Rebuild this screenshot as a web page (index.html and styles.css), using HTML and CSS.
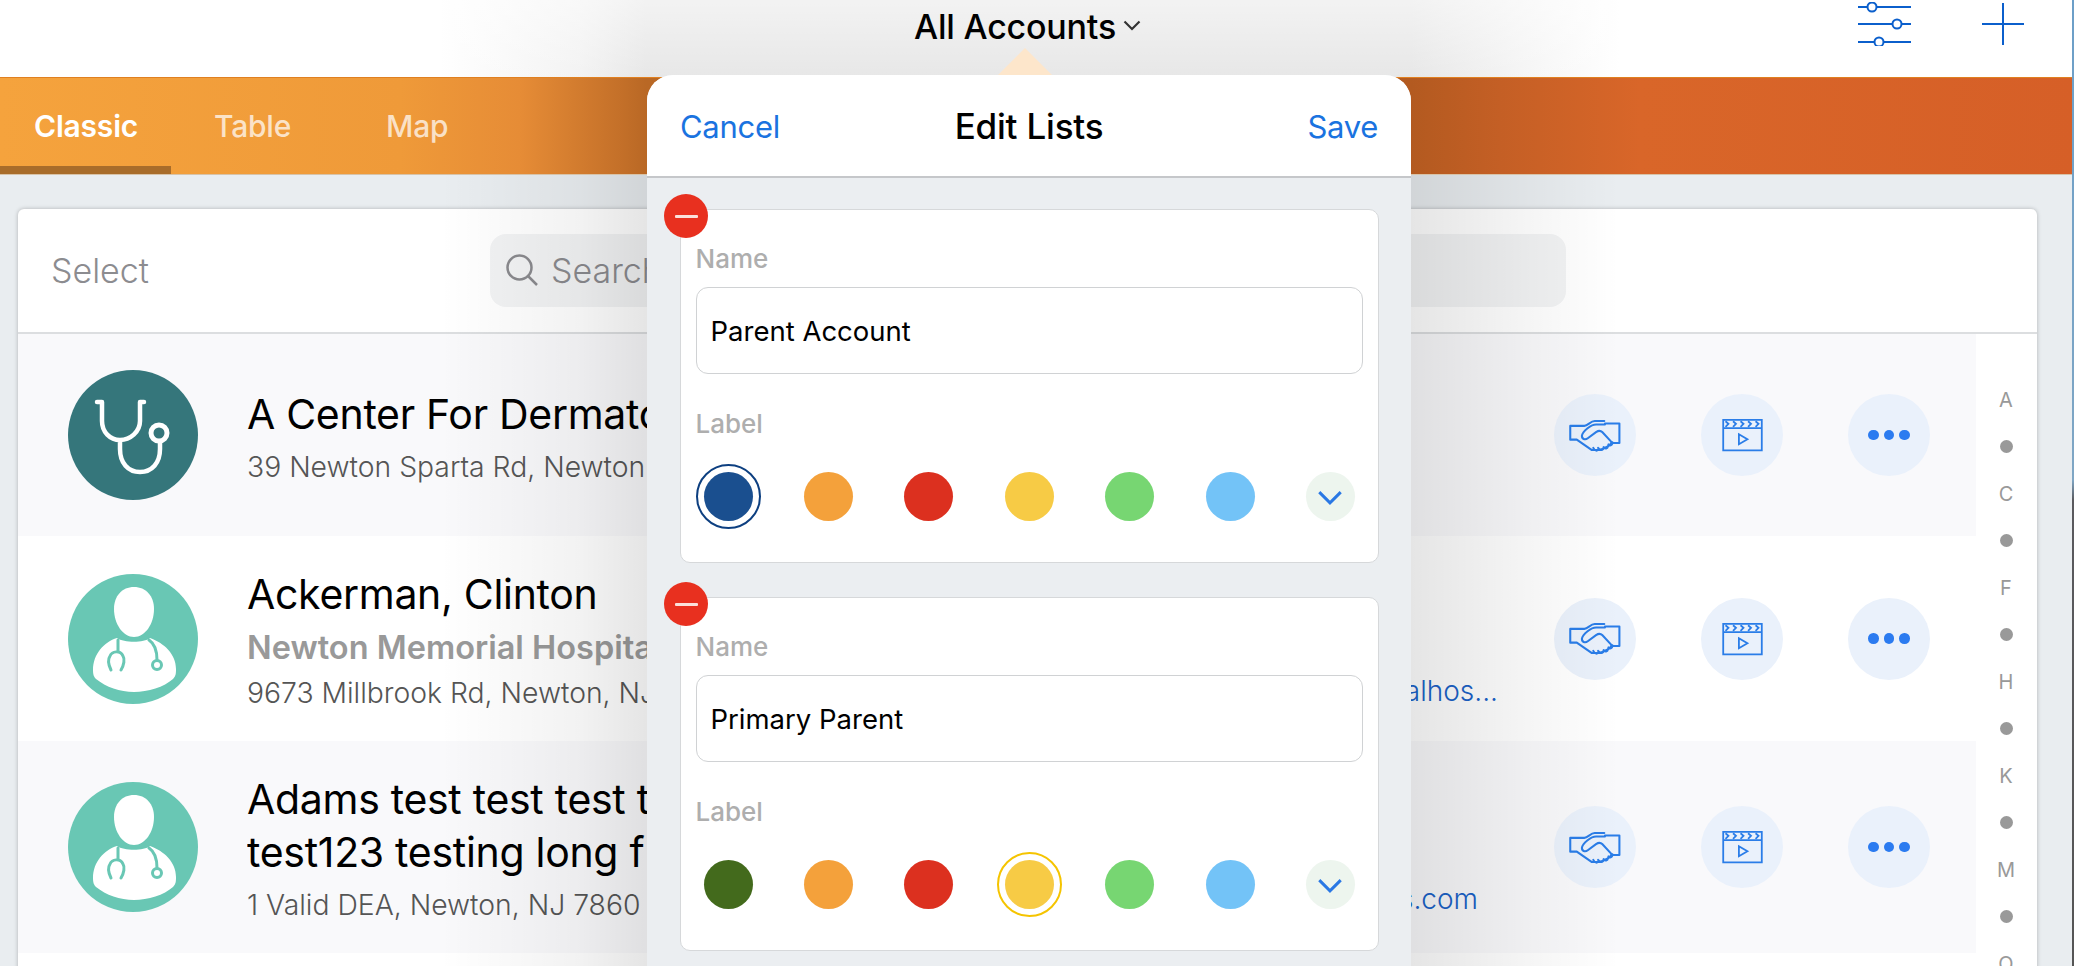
FILE: index.html
```html
<!DOCTYPE html>
<html lang="en">
<head>
<meta charset="utf-8">
<title>All Accounts</title>
<link rel="stylesheet" href="styles.css">
</head>
<body>
<svg class="defs" aria-hidden="true">
  <symbol id="i-shake" viewBox="150 118 150 96">
    <path d="M252 124H224C212 124 204 138 194 138H153V178H172L215 208H240L262 198L276 186" />
    <path d="M254 131H296V188H272" />
    <path d="M254 134H228C214 134 190 152 187 166C186 176 196 180 204 174L228 156C234 152 240 150 246 156L274 186C278 192 270 198 264 192M262 198C262 204 254 206 250 200M248 206C244 210 238 208 234 202M230 210C226 210 222 206 220 202" />
  </symbol>
  <symbol id="i-clap" viewBox="600 114 130 104">
    <path d="M606 120H724V213H606ZM606 145H724" />
    <path d="M613 124L622 132L613 141M636 124L645 132L636 141M659 124L668 132L659 141M682 124L691 132L682 141M705 124L714 132L705 141" />
    <path d="M654 164L680 179L654 194Z" />
  </symbol>
  <symbol id="i-doc" viewBox="0 0 130 130">
    <circle cx="65" cy="65" r="65" fill="#69c7b4" />
    <path d="M49 64C36 68 25 80 25 96C25 101 26 103 28 105C38 113 52 118 66 118C80 118 96 113 105 105C108 102 108 99 108 95C108 80 96 69 82 64C76 69 56 69 49 64Z" fill="#fff" />
    <path d="M66 13C54 13 46 22 46 35C46 50 55 63 66 63C77 63 86 50 86 35C86 22 78 13 66 13Z" fill="#fff" />
    <path d="M50 66V78M43 96C40 90 40 85 42 82C44 77 52 76 55 82C57 85 56 91 53 96M81 66C87 70 89 76 89 86" fill="none" stroke="#69c7b4" stroke-width="3" stroke-linecap="round" />
    <circle cx="89" cy="91" r="4.5" fill="#fff" stroke="#69c7b4" stroke-width="3" />
  </symbol>
  <symbol id="i-steth" viewBox="0 0 130 130">
    <circle cx="65" cy="65" r="65" fill="#35767b" />
    <path d="M29 32H34V51C34 62 42 70 52 70C62 70 72 62 72 51V32H76M52 70V79C52 93 60 102 72 102C84 102 92 93 92 79V70" fill="none" stroke="#fff" stroke-width="4.5" stroke-linecap="round" stroke-linejoin="round" />
    <circle cx="91" cy="63" r="8" fill="#35767b" stroke="#fff" stroke-width="5" />
  </symbol>
</svg>

<div class="page">
  <header class="topbar">
    <div class="title">All Accounts
      <svg class="title-chevron" viewBox="0 0 18 11"><path d="M1.500 1.500L9 9L16.500 1.500" /></svg>
    </div>
    <svg class="filter-icon" viewBox="0 0 53 44">
      <path d="M0 5H53M0 22H53M0 40H53" />
      <circle cx="14" cy="5" r="4.500" />
      <circle cx="39" cy="22" r="4.500" />
      <circle cx="21" cy="40" r="4.500" />
    </svg>
    <svg class="plus-icon" viewBox="0 0 42 42"><path d="M21 0V42M0 21H42" /></svg>
  </header>

  <nav class="tabs">
    <a class="tab tab-active">Classic</a>
    <a class="tab">Table</a>
    <a class="tab">Map</a>
  </nav>

  <main class="content">
    <section class="card">
      <div class="toolbar">
        <span class="select">Select</span>
        <div class="search">
          <svg class="search-icon" viewBox="0 0 32 32"><circle cx="13.500" cy="13.500" r="12" /><path d="M22 22L31 31" /></svg>
          <span>Search</span>
        </div>
      </div>
      <div class="list-wrap">
        <div class="rows">
          <article class="row row-shaded row-a">
            <svg class="avatar"><use href="#i-steth" /></svg>
            <div class="info">
              <div class="name">A Center For Dermato</div>
              <div class="address">39 Newton Sparta Rd, Newton</div>
            </div>
            <div class="actions">
              <span class="action"><svg class="ic-shake"><use href="#i-shake" /></svg></span>
              <span class="action"><svg class="ic-clap"><use href="#i-clap" /></svg></span>
              <span class="action"><span class="dots"><i></i><i></i><i></i></span></span>
            </div>
          </article>
          <article class="row row-b">
            <svg class="avatar"><use href="#i-doc" /></svg>
            <div class="info">
              <div class="name">Ackerman, Clinton</div>
              <div class="org">Newton Memorial Hospital</div>
              <div class="address">9673 Millbrook Rd, Newton, NJ</div>
            </div>
            <a class="contact">carvalhos...</a>
            <div class="actions">
              <span class="action"><svg class="ic-shake"><use href="#i-shake" /></svg></span>
              <span class="action"><svg class="ic-clap"><use href="#i-clap" /></svg></span>
              <span class="action"><span class="dots"><i></i><i></i><i></i></span></span>
            </div>
          </article>
          <article class="row row-shaded row-c">
            <svg class="avatar"><use href="#i-doc" /></svg>
            <div class="info">
              <div class="name">Adams test test test t<br>test123 testing long f</div>
              <div class="address">1 Valid DEA, Newton, NJ 7860</div>
            </div>
            <a class="contact contact-short">tests.com</a>
            <div class="actions">
              <span class="action"><svg class="ic-shake"><use href="#i-shake" /></svg></span>
              <span class="action"><svg class="ic-clap"><use href="#i-clap" /></svg></span>
              <span class="action"><span class="dots"><i></i><i></i><i></i></span></span>
            </div>
          </article>
        </div>
        <aside class="index">
          <span>A</span><i></i><span>C</span><i></i><span>F</span><i></i><span>H</span><i></i><span>K</span><i></i><span>M</span><i></i><span>O</span>
        </aside>
      </div>
    </section>
  </main>

  <div class="scrim"></div>
  <div class="window-edge"></div>

  <div class="caret"></div>
  <section class="modal">
    <header class="modal-head">
      <a class="link">Cancel</a>
      <h2>Edit Lists</h2>
      <a class="link">Save</a>
    </header>
    <div class="modal-body">
      <div class="list-card">
        <span class="delete"></span>
        <div class="field-label">Name</div>
        <div class="input">Parent Account</div>
        <div class="field-label label-second">Label</div>
        <div class="swatches">
          <span class="swatch swatch-navy selected"></span>
          <span class="swatch swatch-orange"></span>
          <span class="swatch swatch-red"></span>
          <span class="swatch swatch-yellow"></span>
          <span class="swatch swatch-green"></span>
          <span class="swatch swatch-blue"></span>
          <span class="swatch swatch-more"><svg viewBox="0 0 24 14"><path d="M2 2L12 12L22 2" /></svg></span>
        </div>
      </div>
      <div class="list-card">
        <span class="delete"></span>
        <div class="field-label">Name</div>
        <div class="input">Primary Parent</div>
        <div class="field-label label-second">Label</div>
        <div class="swatches">
          <span class="swatch swatch-moss"></span>
          <span class="swatch swatch-orange"></span>
          <span class="swatch swatch-red"></span>
          <span class="swatch swatch-yellow selected"></span>
          <span class="swatch swatch-green"></span>
          <span class="swatch swatch-blue"></span>
          <span class="swatch swatch-more"><svg viewBox="0 0 24 14"><path d="M2 2L12 12L22 2" /></svg></span>
        </div>
      </div>
    </div>
  </section>
</div>
</body>
</html>
```

FILE: styles.css
```css
* { box-sizing: border-box; }
html, body { margin: 0; height: 100%; }
body { overflow: hidden; background: #e9edf0; font-family: Inter, "Liberation Sans", sans-serif; color: #000; }
.defs { display: none; }
.page { position: relative; width: 2074px; height: 966px; overflow: hidden; background: #e9edf0; }

/* top bar */
.topbar { position: relative; z-index: 2; height: 77px; display: flex; align-items: flex-start;
  background:
    linear-gradient(180deg, rgba(255,255,255,.5) 0, rgba(255,255,255,.05) 77px),
    linear-gradient(90deg, #fff 440px, #f2f2f2 580px, #e6e6e6 646px, #e6e6e6 1411px, #f5f5f5 1529px, #fff 1620px); }
.title { position: absolute; left: 914px; top: 7px; font-size: 34px; line-height: 40px; font-weight: 500; letter-spacing: -0.2px; display: flex; align-items: center; }
.title-chevron { width: 18px; height: 11px; margin-left: 7px; margin-top: -3px; fill: none; stroke: #333; stroke-width: 2.200; }
.filter-icon { position: absolute; left: 1858px; top: 2px; width: 53px; height: 44px; fill: #fff; stroke: #0b5fcc; stroke-width: 2; }
.plus-icon { position: absolute; left: 1982px; top: 3px; width: 42px; height: 42px; fill: none; stroke: #0b5fcc; stroke-width: 2; }

/* tabs */
.tabs { position: relative; z-index: 2; height: 98px; display: flex;
  background: linear-gradient(90deg, #f5a33d 0, #ef9a39 400px, #e68c36 520px, #c47029 620px, #b96825 646px, #b35a20 1411px, #c45f25 1500px, #d96629 1640px, #d65f27 2074px);
  border-top: 1px solid #e08020; border-bottom: 1px solid #d8c3a8; }
.tab { width: 171px; padding-left: 34px; padding-top: 30px; font-size: 30px; line-height: 36px; font-weight: 500; color: rgba(255,255,255,.72); position: relative; letter-spacing: -0.2px; }
.tab-active { color: #fff; font-weight: 600; }
.tab-active::after { content: ""; position: absolute; left: 0; right: 0; bottom: 0; height: 8px; background: #a86c2a; }
.tab:nth-child(2) { padding-left: 43px; }
.tab:nth-child(3) { padding-left: 44px; }

/* main card */
.content { padding: 34px 37px 0 18px; }
.card { background: #fff; border-radius: 6px 6px 0 0; box-shadow: 0 0 4px rgba(0,0,0,.25); height: 800px; overflow: hidden; }
.toolbar { height: 125px; border-bottom: 2px solid #dcdee0; display: flex; align-items: center; padding-left: 33px; position: relative; }
.select { font-size: 34px; color: #8c8c90; font-weight: 300; width: 439px; }
.search { width: 1076px; height: 73px; margin-top: -1px; border-radius: 16px; background: #f2f3f4; display: flex; align-items: center; padding-left: 16px; gap: 13px; font-size: 34px; color: #8a8a8e; font-weight: 300; }
.search-icon { width: 32px; height: 32px; fill: none; stroke: #8a8a8e; stroke-width: 2.500; flex: none; }

.list-wrap { display: flex; }
.rows { width: 1958px; flex: none; }
.row { display: flex; align-items: center; padding-left: 50px; background: #fff; }
.row-shaded { background: #f9f9fb; }
.row-a { height: 202px; }
.row-b { height: 205px; }
.row-c { height: 212px; }
.avatar { width: 130px; height: 130px; flex: none; margin-right: 49px; }
.info { flex: 1; min-width: 0; padding-top: 2px; white-space: nowrap; overflow: hidden; }
.name { font-size: 41px; line-height: 53px; letter-spacing: -0.3px; }
.org { font-size: 32.500px; line-height: 38px; font-weight: 600; color: #999; margin-top: 8px; }
.address { font-size: 28.300px; line-height: 36px; color: #555; font-weight: 300; margin-top: 8px; }
.contact { width: 300px; flex: none; margin-right: 36px; padding-top: 104px; text-align: right; font-size: 28px; line-height: 30px; color: #1a62c8; font-weight: 300; white-space: nowrap; }
.contact-short { padding-right: 20px; }
.actions { display: flex; gap: 65px; margin-right: 46px; margin-left: 20px; flex: none; }
.action { width: 82px; height: 82px; border-radius: 50%; background: #eaf1fb; display: flex; align-items: center; justify-content: center; }
.ic-shake { width: 52px; height: 33px; fill: none; stroke: #2a7de8; stroke-width: 6; stroke-linejoin: round; stroke-linecap: round; }
.ic-clap { width: 43px; height: 34px; fill: none; stroke: #2a7de8; stroke-width: 5.500; stroke-linejoin: miter; }
.dots { display: flex; gap: 5px; }
.dots i { width: 10.500px; height: 10.500px; border-radius: 50%; background: #2b7bf0; }

.index { width: 60px; display: grid; grid-auto-rows: 47px; place-items: center; padding-top: 42px; }
.index span { font-size: 20px; line-height: 24px; color: #999; }
.index i { width: 13px; height: 13px; border-radius: 50%; background: #999; }

/* scrim behind modal */
.scrim { position: absolute; inset: 0; z-index: 1; pointer-events: none;
  background: linear-gradient(90deg, rgba(0,0,0,0) 440px, rgba(0,0,0,.05) 580px, rgba(0,0,0,.1) 646px, rgba(0,0,0,.1) 1411px, rgba(0,0,0,.04) 1529px, rgba(0,0,0,0) 1620px); }
.window-edge { position: absolute; z-index: 5; right: 0; top: 0; bottom: 0; width: 2px; background: linear-gradient(180deg, #6c9fc8 0, #7fa6c4 480px, #5a5a5e 500px, #555 966px); }

/* modal */
.caret { position: absolute; z-index: 3; left: 997px; top: 48px; width: 56px; height: 28px; background: #fde6cb; clip-path: polygon(50% 0, 100% 100%, 0 100%); }
.modal { position: absolute; z-index: 4; left: 647px; top: 75px; width: 764px; height: 891px; background: #ebeef1; border-radius: 26px 26px 0 0; overflow: hidden; }
.modal-head { height: 103px; background: #fff; border-bottom: 2px solid #c5c7ca; display: flex; align-items: center; justify-content: space-between; padding: 0 33px; position: relative; }
.modal-head h2 { position: absolute; left: 0; right: 0; margin: 0; text-align: center; font-size: 35px; line-height: 40px; font-weight: 500; letter-spacing: -0.2px; }
.link { font-size: 31px; line-height: 40px; color: #1a73e0; font-weight: 400; letter-spacing: -0.3px; padding-top: 2px; }
.modal-body { padding: 31px 32px 0 33px; display: flex; flex-direction: column; gap: 34px; }
.list-card { position: relative; height: 354px; background: #fff; border: 1px solid #d6d8da; border-radius: 10px; padding: 34px 15px 0 14.500px; }
.delete { position: absolute; left: -17px; top: -16px; width: 44px; height: 44px; border-radius: 50%; background: #e8301f; }
.delete::after { content: ""; position: absolute; left: 10.500px; top: 20.500px; width: 23px; height: 3px; background: #fbe0da; border-radius: 1px; }
.field-label { font-size: 26px; line-height: 30px; font-weight: 500; color: #aeaeae; }
.label-second { margin-top: 35px; }
.input { height: 87px; margin-top: 13px; border: 1px solid #d0d2d4; border-radius: 12px; padding-left: 14px; display: flex; align-items: center; font-size: 27.500px; }
.swatches { display: flex; justify-content: space-between; margin-top: 33px; padding: 0 8px; }
.swatch { position: relative; width: 49px; height: 49px; border-radius: 50%; display: flex; align-items: center; justify-content: center; flex: none; }
.swatch.selected::after { content: ""; position: absolute; inset: -8px; border-radius: 50%; border: 2px solid currentColor; }
.swatch-navy { background: #1a4f8f; color: #0d3f80; }
.swatch-moss { background: #436a1c; }
.swatch-orange { background: #f4a13b; }
.swatch-red { background: #dc301f; }
.swatch-yellow { background: #f7cb45; color: #f5c400; }
.swatch-green { background: #77d672; }
.swatch-blue { background: #73c3f7; }
.swatch-more { background: #edf5ee; }
.swatch-more svg { width: 26px; height: 15px; fill: none; stroke: #2a78e4; stroke-width: 2.800; margin-top: 2px; }
```
